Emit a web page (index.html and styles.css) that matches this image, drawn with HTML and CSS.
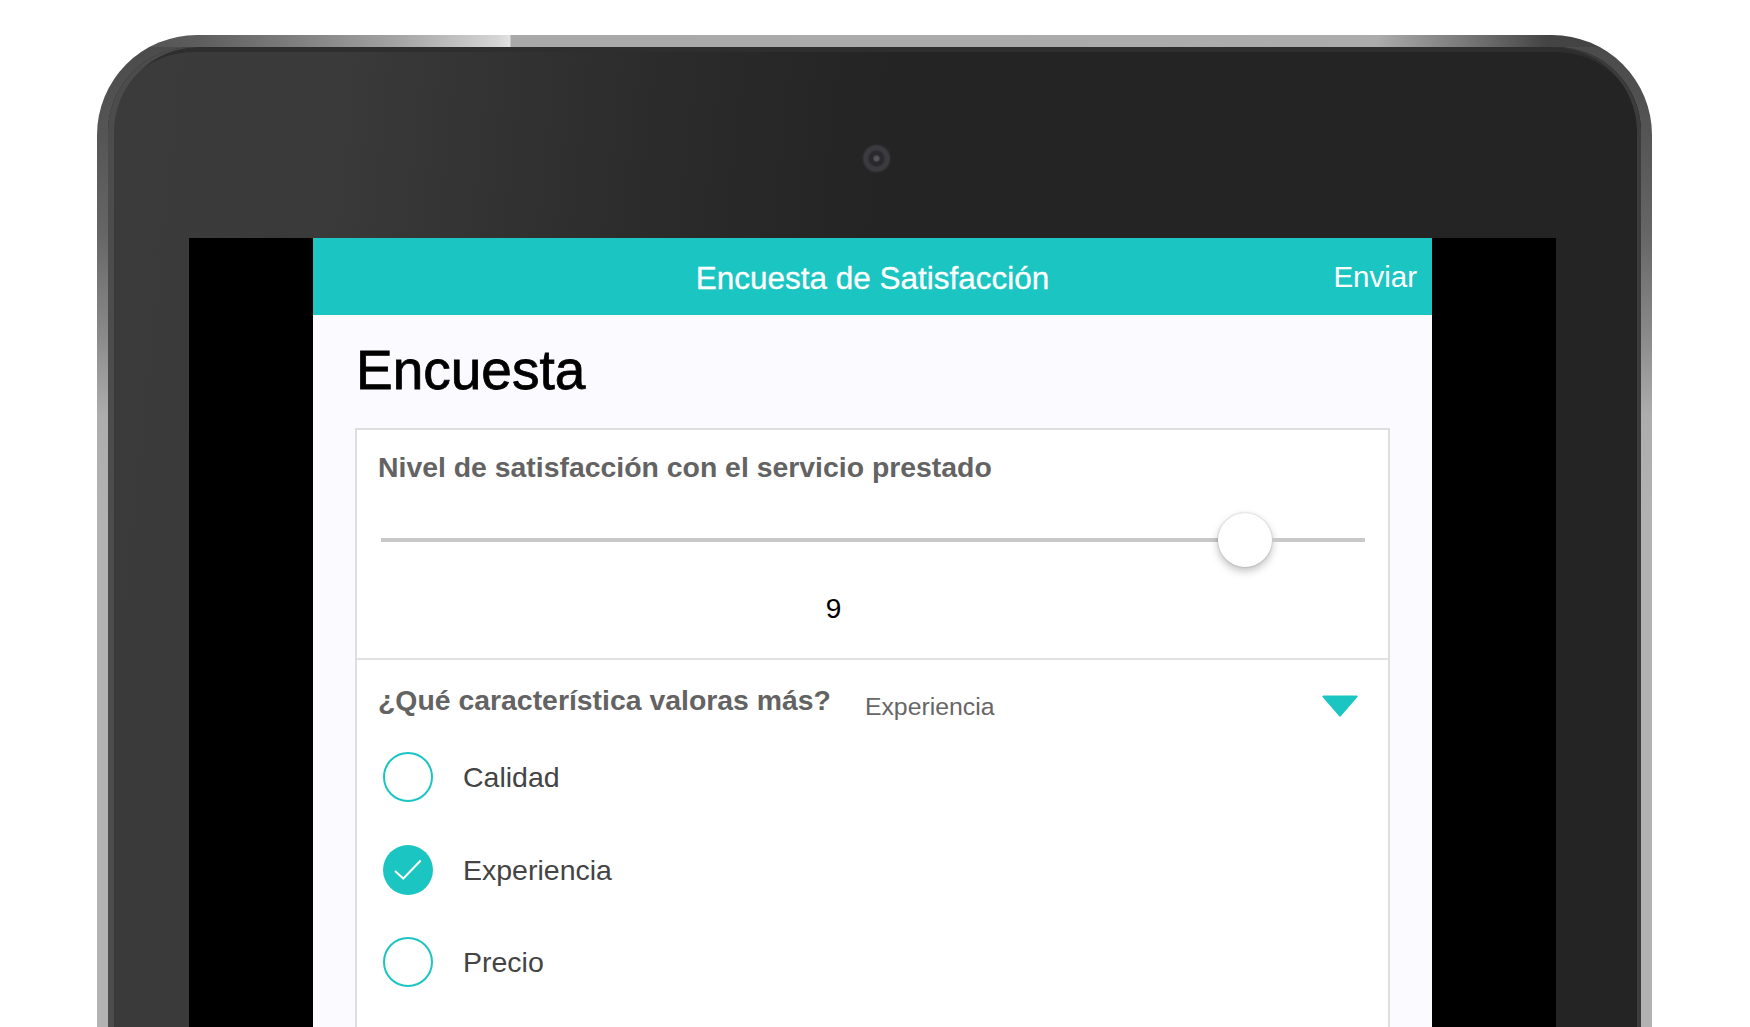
FILE: index.html
```html
<!DOCTYPE html>
<html lang="es">
<head>
<meta charset="utf-8">
<title>Encuesta de Satisfacción</title>
<link rel="stylesheet" href="styles.css">
</head>
<body>
<div class="tablet">
  <div class="bezel">
    <div class="camera-row"><span class="camera"></span></div>
    <div class="display">
      <main class="screen">
        <header class="appbar">
          <span></span>
          <span class="appbar-title">Encuesta de Satisfacción</span>
          <span class="appbar-action">Enviar</span>
        </header>
        <div class="content">
          <h1 class="page-title">Encuesta</h1>
          <section class="card">
            <div class="group group-slider">
              <div class="question">Nivel de satisfacción con el servicio prestado</div>
              <div class="slider">
                <span class="track track-before"></span>
                <span class="thumb"></span>
                <span class="track track-after"></span>
              </div>
              <div class="slider-value">9</div>
            </div>
            <div class="group">
              <div class="select-row">
                <span class="question">¿Qué característica valoras más?</span>
                <span class="select-value">Experiencia</span>
                <svg class="caret" width="36" height="22" viewBox="0 0 36 22"><path d="M1.5 1.5H34.5L18 20.5Z" fill="#1bc5c2" stroke="#1bc5c2" stroke-width="2" stroke-linejoin="round"/></svg>
              </div>
              <ul class="options">
                <li class="option"><span class="radio"></span><span class="option-label">Calidad</span></li>
                <li class="option"><span class="radio radio-on"><svg width="50" height="50" viewBox="0 0 50 50"><path d="M12 26L20.3 33.5L37.7 15.5" fill="none" stroke="#fff" stroke-width="2"/></svg></span><span class="option-label">Experiencia</span></li>
                <li class="option"><span class="radio"></span><span class="option-label">Precio</span></li>
              </ul>
            </div>
          </section>
        </div>
      </main>
    </div>
  </div>
</div>
</body>
</html>
```
FILE: styles.css
```css
* { box-sizing: border-box; }
html, body { margin: 0; height: 1027px; overflow: hidden; background: #fff; }
body { font-family: "Liberation Sans", Arial, sans-serif; }

.tablet {
  margin: 35px 0 0 97px;
  width: 1555px;
  height: 1100px;
  padding: 12px 11px 0 11px;
  border-radius: 100px 100px 0 0;
  background:
    linear-gradient(90deg, #4e4e4e 0, #5c5c5c 98px, #7c7c7c 190px, #a4a4a4 300px, #d4d4d4 400px, #e2e2e2 413px, #a9a9a9 414px, #acacac 1280px, #7a7a7a 1365px, #444 1450px) top / 100% 12px no-repeat,
    linear-gradient(180deg, #4a4a4a 0, #555 100px, #666 200px, #8a8a8a 300px, #adadad 380px, #b2b2b2 480px);
}
.bezel {
  height: 100%;
  padding: 5px 4px 0 6px;
  border-radius: 85px 85px 0 0;
  background: linear-gradient(96deg, #3b3b3b 0, #3a3a3a 230px, #2b2b2b 560px, #242424 780px);
  box-shadow: inset 6px 0 0 #4c4c4c, inset -4px 0 0 #3c3c3c, inset 0 5px 0 #2e2e2e;
}
.camera-row {
  height: 186px;
  padding: 92px 0 0 748px;
}
.camera {
  display: block;
  width: 29px;
  height: 29px;
  border-radius: 50%;
  filter: blur(0.6px);
  background: radial-gradient(circle, #55555a 0, #55555a 2px, #2a2a2e 4px, #2a2a2e 7px, #3a3a3f 9px, #3c3c40 12px, #2c2c2e 14px, #262626 15px);
}
.display {
  margin: 0 81px 0 75px;
  padding: 0 124px 0 124px;
  height: 862px;
  background: #000;
}
.screen {
  height: 100%;
  background: #fafaff;
}
.appbar {
  display: grid;
  grid-template-columns: 1fr auto 1fr;
  align-items: center;
  height: 77px;
  padding: 4px 15px 0;
  background: #1bc5c2;
  color: #fff;
}
.appbar-title {
  font-size: 31.5px;
  -webkit-text-stroke: 0.3px #fff;
}
.appbar-action {
  justify-self: end;
  padding-bottom: 3px;
  font-size: 29.5px;
}
.content { padding: 0 42px; }
.page-title {
  margin: 25px 0 28px 1px;
  font-size: 55px;
  line-height: 60px;
  font-weight: 400;
  color: #000;
  -webkit-text-stroke: 0.8px #000;
}
.card {
  height: 800px;
  border: 2px solid #dedede;
  background: #fff;
}
.group { padding: 23px 23px 0 21px; }
.group-slider {
  padding-top: 20px;
  padding-bottom: 33px;
  border-bottom: 2px solid #e2e2e2;
}
.question {
  font-size: 28.4px;
  line-height: 34px;
  font-weight: 700;
  color: #636363;
}
.slider {
  display: flex;
  align-items: center;
  margin: 29px 0 0 3px;
}
.track {
  height: 4px;
  background: #c9c9c9;
}
.track-before { width: 837px; }
.track-after { flex: 1; }
.thumb {
  width: 54px;
  height: 54px;
  border-radius: 50%;
  background: #fff;
  box-shadow: 0 0 2px rgba(0, 0, 0, .25), 0 4px 8px rgba(0, 0, 0, .25);
}
.slider-value {
  margin-top: 25px;
  margin-bottom: -1px;
  padding-right: 76px;
  text-align: center;
  font-size: 28px;
  line-height: 34px;
  color: #000;
}
.select-row {
  display: flex;
  align-items: flex-start;
}
.select-value {
  margin-left: 34px;
  padding-top: 7px;
  font-size: 24.8px;
  line-height: 34px;
  color: #666;
}
.caret {
  margin: 12px 7px 0 auto;
}
.options {
  list-style: none;
  margin: 7px 0 0 5px;
  padding: 0;
}
.option {
  display: flex;
  align-items: center;
  gap: 30px;
  height: 92.5px;
}
.radio {
  flex: none;
  width: 50px;
  height: 50px;
  border-radius: 50%;
  border: 2px solid #1bc5c2;
}
.radio-on { border: 0; background: #1bc5c2; }
.radio svg { display: block; }
.option-label {
  font-size: 28.5px;
  line-height: 34px;
  color: #444;
}
```
